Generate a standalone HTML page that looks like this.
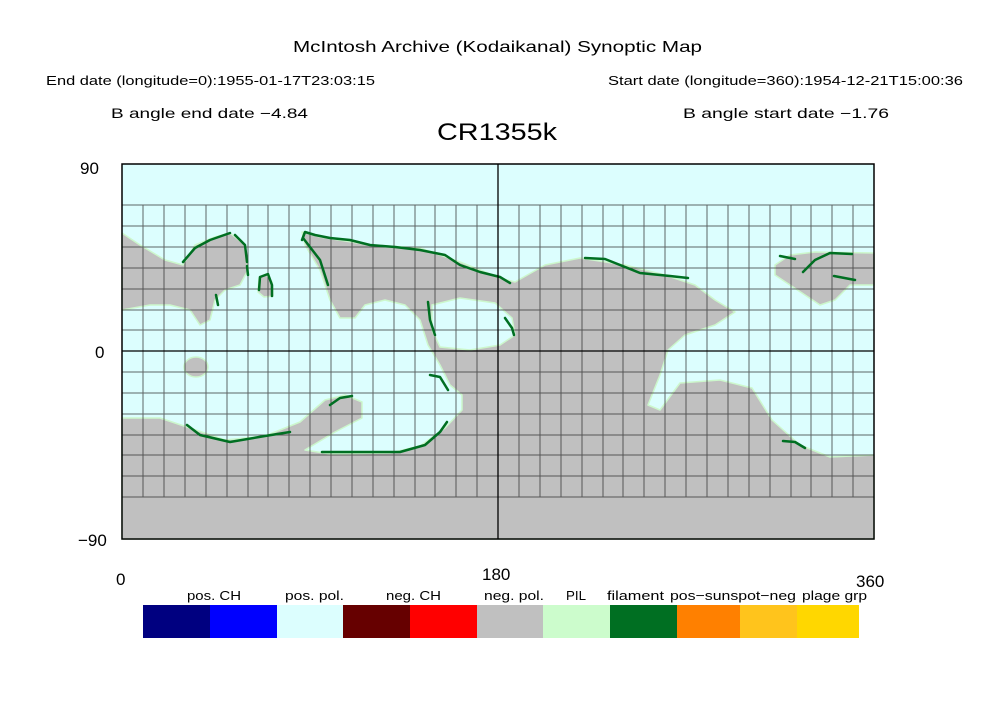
<!DOCTYPE html>
<html><head><meta charset="utf-8"><style>
html,body{margin:0;padding:0;background:#fff;width:997px;height:704px;overflow:hidden}
svg{display:block}
text{font-family:"Liberation Sans",sans-serif;fill:#000}
</style></head><body>
<svg width="997" height="704" viewBox="0 0 997 704" xmlns="http://www.w3.org/2000/svg">
<text x="293" y="52" font-size="16" textLength="409" lengthAdjust="spacingAndGlyphs">McIntosh Archive (Kodaikanal) Synoptic Map</text>
<text x="46" y="85" font-size="13" textLength="329" lengthAdjust="spacingAndGlyphs">End date (longitude=0):1955-01-17T23:03:15</text>
<text x="608" y="85" font-size="13" textLength="355" lengthAdjust="spacingAndGlyphs">Start date (longitude=360):1954-12-21T15:00:36</text>
<text x="111" y="118" font-size="14" textLength="197" lengthAdjust="spacingAndGlyphs">B angle end date −4.84</text>
<text x="683" y="118" font-size="14" textLength="206" lengthAdjust="spacingAndGlyphs">B angle start date −1.76</text>
<text x="437" y="140" font-size="24" textLength="120" lengthAdjust="spacingAndGlyphs">CR1355k</text>

<rect x="122" y="164" width="752" height="375" fill="#dcfefe"/>
<g fill="#c0c0c0" stroke="#ccf7cc" stroke-width="1.5" stroke-linejoin="round">
<path d="M122,233 L140,245 L165,260 L183,265 L195,245 L215,237 L230,233 L245,245 L248,270 L240,285 L225,290 L215,300 L210,320 L200,325 L190,310 L170,305 L150,305 L122,310 Z"/>
<path d="M258,292 L259,278 L266,274 L272,282 L273,296 L264,297 Z"/>
<ellipse cx="196" cy="367" rx="12" ry="10"/>
<path d="M302,232 L320,237 L370,245 L420,248 L460,262 L500,278 L515,282 L545,265 L580,258 L625,265 L665,275 L695,285 L715,300 L735,312 L715,325 L685,335 L668,350 L660,375 L648,405 L660,410 L680,383 L720,380 L752,388 L772,420 L800,445 L830,457 L874,455 L874,539 L122,539 L122,418 L160,418 L190,428 L225,440 L265,436 L300,422 L325,400 L345,395 L362,402 L362,418 L335,432 L305,450 L330,454 L390,453 L420,446 L445,428 L462,410 L462,395 L450,385 L440,365 L428,345 L420,320 L405,305 L385,300 L365,305 L355,318 L340,318 L330,300 L320,270 L305,245 Z"/>
<path d="M775,265 L790,255 L815,252 L874,253 L874,285 L850,285 L835,300 L820,305 L805,295 L790,285 L775,275 Z"/>
</g>
<path d="M432,305 L460,298 L495,303 L512,318 L515,335 L500,345 L470,350 L440,347 L432,330 Z" fill="#dcfefe" stroke="#ccf7cc" stroke-width="1.5"/>
<g stroke="#333" stroke-width="1" fill="none" opacity="0.75">
<path d="M143,205V497M164,205V497M185,205V497M206,205V497M227,205V497M248,205V497M268,205V497M289,205V497M310,205V497M331,205V497M352,205V497M373,205V497M394,205V497M415,205V497M435,205V497M456,205V497M477,205V497M519,205V497M540,205V497M561,205V497M582,205V497M603,205V497M623,205V497M644,205V497M665,205V497M686,205V497M707,205V497M728,205V497M749,205V497M770,205V497M791,205V497M811,205V497M832,205V497M853,205V497"/>
<path d="M122,205H874M122,226H874M122,247H874M122,268H874M122,289H874M122,310H874M122,330H874M122,372H874M122,393H874M122,414H874M122,435H874M122,455H874M122,476H874M122,497H874"/>
</g>
<g stroke="#006f22" stroke-width="2.5" fill="none" stroke-linecap="round" stroke-linejoin="round">
<path d="M183,262 L195,248 L210,240 L230,233"/>
<path d="M235,235 L245,245 L247,262 M247,266 L248,275"/>
<path d="M216,295 L218,305"/>
<path d="M259,290 L260,277 L268,274 L272,285 L272,296"/>
<path d="M302,240 L305,232 L315,235 L330,238 L350,240 L370,245 L395,247 L420,250 L445,255 L460,265 L480,272 L500,277 L510,283"/>
<path d="M303,238 L320,260 L328,285"/>
<path d="M428,302 L430,320 L435,335"/>
<path d="M505,318 L512,328 L514,335"/>
<path d="M430,375 L440,377 L448,390"/>
<path d="M187,425 L200,435 L230,442 L265,436 L290,432"/>
<path d="M330,405 L340,398 L352,396"/>
<path d="M322,452 L360,452 L400,452 L425,445 L440,432 L447,422"/>
<path d="M585,258 L605,259 L640,273 L670,276 L688,278"/>
<path d="M780,256 L795,259 M803,272 L815,260 L830,253 L852,254"/>
<path d="M834,276 L855,280"/>
<path d="M783,441 L795,442 L805,448"/>
</g>
<path d="M122,351H874M498,164V539" stroke="#000" stroke-width="1.3"/>
<rect x="122" y="164" width="752" height="375" fill="none" stroke="#000" stroke-width="1.5"/>
<text x="80" y="174" font-size="17">90</text>
<text x="95" y="358" font-size="17">0</text>
<text x="78" y="546" font-size="17">−90</text>
<text x="116" y="585" font-size="17">0</text>
<text x="482" y="580" font-size="17">180</text>
<text x="856" y="587" font-size="17">360</text>
<g font-size="13" lengthAdjust="spacingAndGlyphs">
<text x="187" y="600" textLength="54" lengthAdjust="spacingAndGlyphs">pos. CH</text>
<text x="285" y="600" textLength="59" lengthAdjust="spacingAndGlyphs">pos. pol.</text>
<text x="386" y="600" textLength="55" lengthAdjust="spacingAndGlyphs">neg. CH</text>
<text x="484" y="600" textLength="60" lengthAdjust="spacingAndGlyphs">neg. pol.</text>
<text x="566" y="600" textLength="20" lengthAdjust="spacingAndGlyphs">PIL</text>
<text x="607" y="600" textLength="57" lengthAdjust="spacingAndGlyphs">filament</text>
<text x="670" y="600" textLength="126" lengthAdjust="spacingAndGlyphs">pos−sunspot−neg</text>
<text x="802" y="600" textLength="65" lengthAdjust="spacingAndGlyphs">plage grp</text>
</g>
<rect x="143" y="605" width="67" height="33" fill="#000080"/>
<rect x="210" y="605" width="67" height="33" fill="#0000ff"/>
<rect x="277" y="605" width="66" height="33" fill="#dcfefe"/>
<rect x="343" y="605" width="67" height="33" fill="#660000"/>
<rect x="410" y="605" width="67" height="33" fill="#ff0000"/>
<rect x="477" y="605" width="66" height="33" fill="#c0c0c0"/>
<rect x="543" y="605" width="67" height="33" fill="#ccfccc"/>
<rect x="610" y="605" width="67" height="33" fill="#006f22"/>
<rect x="677" y="605" width="63" height="33" fill="#ff8000"/>
<rect x="740" y="605" width="57" height="33" fill="#ffc41c"/>
<rect x="797" y="605" width="62" height="33" fill="#ffd700"/>
</svg>
</body></html>
